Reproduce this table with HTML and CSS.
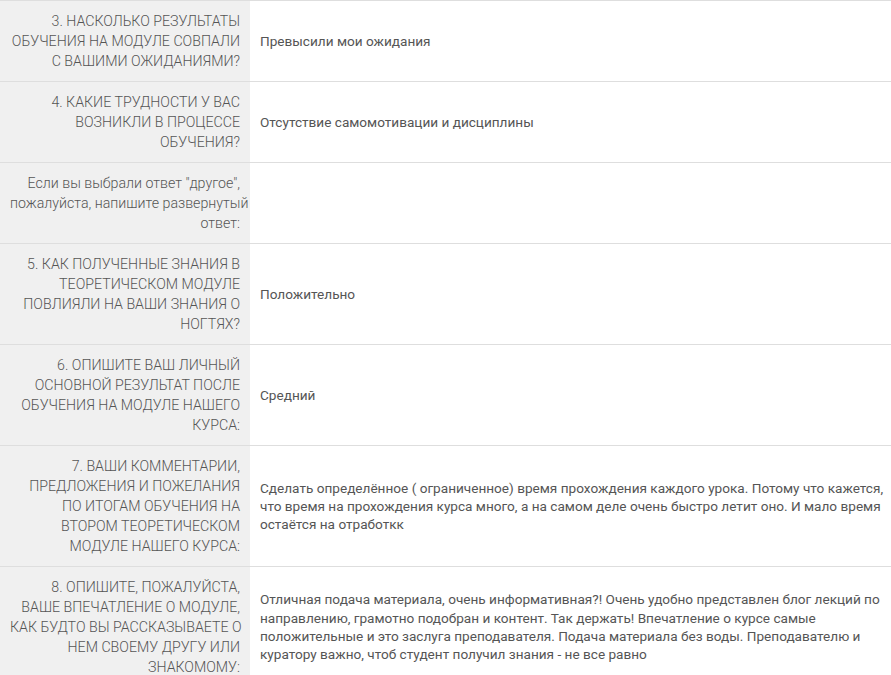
FILE: index.html
```html
<!DOCTYPE html>
<html lang="ru">
  <head>
    <meta charset="UTF-8" />
    <meta name="viewport" content="width=device-width, initial-scale=1.0" />
    <title>Анкета</title>
    <link rel="stylesheet" href="styles.css">
  </head>

  <body>
    <table class="answers">
      <colgroup>
        <col class="col-q" />
        <col />
      </colgroup>
      <tr>
        <th>3. НАСКОЛЬКО РЕЗУЛЬТАТЫ<br />ОБУЧЕНИЯ НА МОДУЛЕ СОВПАЛИ<br />С ВАШИМИ ОЖИДАНИЯМИ?</th>
        <td>Превысили мои ожидания</td>
      </tr>
      <tr>
        <th>4. КАКИЕ ТРУДНОСТИ У ВАС<br />ВОЗНИКЛИ В ПРОЦЕССЕ<br />ОБУЧЕНИЯ?</th>
        <td>Отсутствие самомотивации и дисциплины</td>
      </tr>
      <tr>
        <th>Если вы выбрали ответ "другое",<br />пожалуйста, напишите развернутый<br />ответ:</th>
        <td></td>
      </tr>
      <tr>
        <th>5. КАК ПОЛУЧЕННЫЕ ЗНАНИЯ В<br />ТЕОРЕТИЧЕСКОМ МОДУЛЕ<br />ПОВЛИЯЛИ НА ВАШИ ЗНАНИЯ О<br />НОГТЯХ?</th>
        <td>Положительно</td>
      </tr>
      <tr>
        <th>6. ОПИШИТЕ ВАШ ЛИЧНЫЙ<br />ОСНОВНОЙ РЕЗУЛЬТАТ ПОСЛЕ<br />ОБУЧЕНИЯ НА МОДУЛЕ НАШЕГО<br />КУРСА:</th>
        <td>Средний</td>
      </tr>
      <tr>
        <th>7. ВАШИ КОММЕНТАРИИ,<br />ПРЕДЛОЖЕНИЯ И ПОЖЕЛАНИЯ<br />ПО ИТОГАМ ОБУЧЕНИЯ НА<br />ВТОРОМ ТЕОРЕТИЧЕСКОМ<br />МОДУЛЕ НАШЕГО КУРСА:</th>
        <td>Сделать определённое ( ограниченное) время прохождения каждого урока. Потому что кажется, что время на прохождения курса много, а на самом деле очень быстро летит оно. И мало время остаётся на отработкк</td>
      </tr>
      <tr>
        <th>8. ОПИШИТЕ, ПОЖАЛУЙСТА,<br />ВАШЕ ВПЕЧАТЛЕНИЕ О МОДУЛЕ,<br />КАК БУДТО ВЫ РАССКАЗЫВАЕТЕ О<br />НЕМ СВОЕМУ ДРУГУ ИЛИ<br />ЗНАКОМОМУ:</th>
        <td>Отличная подача материала, очень информативная?! Очень удобно представлен блог лекций по направлению, грамотно подобран и контент. Так держать! Впечатление о курсе самые положительные и это заслуга преподавателя. Подача материала без воды. Преподавателю и куратору важно, чтоб студент получил знания - не все равно</td>
      </tr>
    </table>
  </body>
</html>
```

FILE: styles.css
```css
body,
html {
  margin: 0;
  background: #fff;
  font-family: Roboto, "Liberation Sans", Arial, sans-serif;
}

.answers {
  width: 100%;
  border-collapse: collapse;
  table-layout: fixed;
}

.col-q {
  width: 250px;
}

.answers tr {
  border-top: 1px solid #dedede;
}

.answers th {
  background-color: #f0f0f0;
  text-align: right;
  vertical-align: top;
  font-weight: 300;
  font-size: 14.2px;
  line-height: 20px;
  color: #555;
  padding: 10px 10px;
  white-space: nowrap;
}

.answers td {
  vertical-align: middle;
  font-size: 13.6px;
  line-height: 18.3px;
  color: #555;
  padding: 10px 6px 10px 10px;
}
```
